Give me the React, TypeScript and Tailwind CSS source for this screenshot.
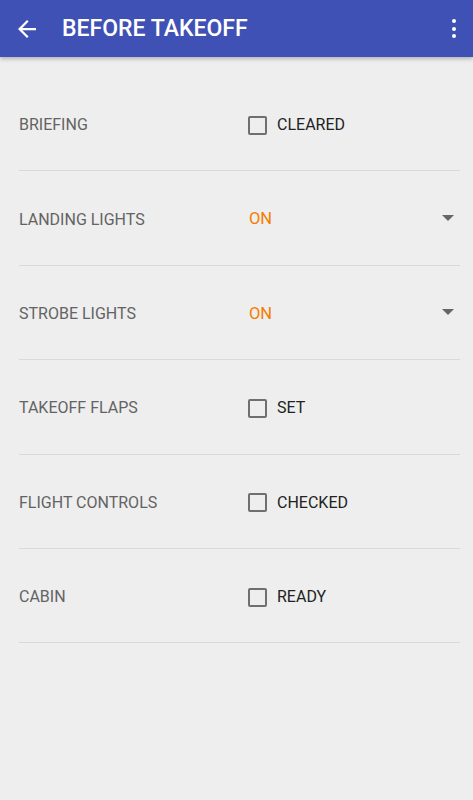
import React from "react";

type Row =
  | { label: string; kind: "check"; value: string }
  | { label: string; kind: "select"; value: string };

const rows: Row[] = [
  { label: "BRIEFING", kind: "check", value: "CLEARED" },
  { label: "LANDING LIGHTS", kind: "select", value: "ON" },
  { label: "STROBE LIGHTS", kind: "select", value: "ON" },
  { label: "TAKEOFF FLAPS", kind: "check", value: "SET" },
  { label: "FLIGHT CONTROLS", kind: "check", value: "CHECKED" },
  { label: "CABIN", kind: "check", value: "READY" },
];

export default function App() {
  return (
    <div
      className="w-[473px] h-[800px] bg-[#eeeeee] flex flex-col overflow-hidden"
      style={{ fontFamily: "Roboto, 'Noto Sans', sans-serif" }}
    >
      <div className="h-[57px] bg-[#3f51b5] flex items-center shadow-[0_2px_4px_rgba(0,0,0,0.25)] relative z-10 shrink-0">
        <div className="w-[62px] flex items-center pl-[18px]">
          <svg width="18" height="18" viewBox="0 0 16 16" fill="none">
            <path d="M16 7H3.83l5.59-5.59L8 0 0 8l8 8 1.41-1.41L3.83 9H16z" fill="#ffffff" />
          </svg>
        </div>
        <div className="flex-1 text-white text-[23px] font-medium pt-[1px]">BEFORE TAKEOFF</div>
        <div className="w-[40px] flex flex-col items-center justify-center gap-[3.5px] pl-[2px]">
          <span className="w-[4px] h-[4px] rounded-full bg-white" />
          <span className="w-[4px] h-[4px] rounded-full bg-white" />
          <span className="w-[4px] h-[4px] rounded-full bg-white" />
        </div>
      </div>
      <div className="pt-[20px] pl-[19px] pr-[13px]">
        {rows.map((r, i) => (
          <div
            key={i}
            className="h-[94.4px] flex items-center border-b border-[#d9d9d9] pt-[3px]"
          >
            <div className="w-[229px] text-[16px] font-normal text-[#636363]">{r.label}</div>
            {r.kind === "check" ? (
              <div className="flex items-center">
                <span className="w-[19px] h-[19px] border-2 border-[#6f6f6f] rounded-[2px]" />
                <span className="ml-[10px] text-[16px] font-normal text-[#222222]">{r.value}</span>
              </div>
            ) : (
              <div className="flex-1 flex items-center">
                <span className="text-[16.5px] font-normal text-[#f57c00] ml-[1px]">{r.value}</span>
                <span className="ml-auto mr-[6px] w-0 h-0 border-l-[6px] border-r-[6px] border-t-[6px] border-l-transparent border-r-transparent border-t-[#666666] -mt-[3px]" />
              </div>
            )}
          </div>
        ))}
      </div>
    </div>
  );
}
